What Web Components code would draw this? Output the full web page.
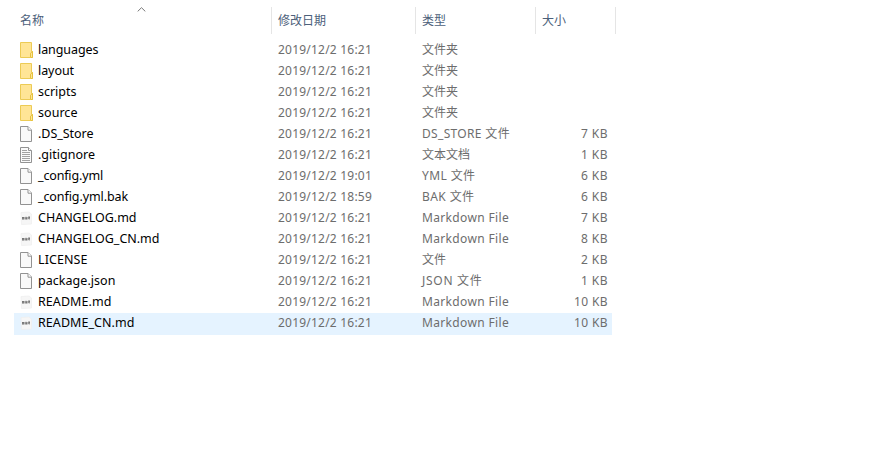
<!DOCTYPE html>
<html lang="zh-CN"><head><meta charset="utf-8"><title>文件列表</title>
<style>html,body{margin:0;background:#fff}body{width:887px;height:449px;overflow:hidden;font-family:"Noto Sans","Noto Sans CJK SC",sans-serif;font-size:12px}</style></head>
<body><file-list></file-list>
<script>
const icons={
folder:'<path d="M.5 .5H11.5V9.5H12.5V15.5H.5Z" fill="#ffe596" stroke="#eccb55"/><path d="M10.5 15V11.2L12.5 9.5V15.5H10.5" fill="#ffe596" stroke="#e6c23f"/>',
file:'<path d="M.5 .5H8L11.5 4V15.5H.5Z" fill="#f9f9f9" stroke="#929292"/><path d="M8 .5V4.2H11.5" fill="#fff" stroke="#929292"/>',
text:'<path d="M.5 .5H8.5L11.5 3.5V15.5H.5Z" fill="#fafafa" stroke="#929292"/><path d="M8.5 .5V3.5H11.5" fill="#fff" stroke="#929292"/><path d="M2 3.5H7M2 5.5H10M2 7.5H10M2 9.5H10M2 11.5H10M2 13.5H10" fill="none" stroke="#a2a2a2"/>',
md:'<path d="M1 2.5L9 2L11.5 4V14L1.5 14.5Z" fill="#f6f6f6" stroke="#eee" stroke-width=".7"/><path d="M2 7H4.5V9.5H2ZM5.2 7H7.5V9.5H5.2ZM8.2 6.5H10V9H8.2Z" fill="#777"/><path d="M3 8.5V10M6 6.5V8M9.2 8V10" stroke="#aaa" stroke-width=".8"/>'};
customElements.define('file-icon',class extends HTMLElement{
connectedCallback(){this.attachShadow({mode:'open'}).innerHTML=`<style>:host{display:block;width:14px;height:16px}svg{display:block}</style><svg width="14" height="16" viewBox="0 0 14 16">${icons[this.getAttribute('kind')]}</svg>`}});
/* Spreads the glyphs so that the label fills its nominal width. */
customElements.define('fit-text',class extends HTMLElement{
connectedCallback(){const w=+this.getAttribute('w');
this.attachShadow({mode:'open'}).innerHTML=`<style>:host{display:inline-block;white-space:pre;line-height:20px}</style><span></span>`;
const s=this.shadowRoot.querySelector('span'),t=this.getAttribute('label');s.textContent=t;
if(w){const n=s.getBoundingClientRect().width,d=(w-n)/t.length;s.style.letterSpacing=d+'px'}}});
customElements.define('column-header',class extends HTMLElement{
connectedCallback(){this.attachShadow({mode:'open'}).innerHTML=`<style>:host{display:grid;grid-template-columns:258px 144px 120px 80px;height:27px;padding:7px 0 6px 14px;color:#4c607a}
div{position:relative;box-sizing:border-box;border-right:1px solid #e5e5e5;padding:4px 0 0 6px}div:first-child{padding-left:3px}svg{position:absolute;left:123px;top:0}</style>
<div><fit-text label="名称" w="24"></fit-text><svg width="9" height="5" viewBox="0 0 9 5"><path d="M.7 4.4L4.5 .7L8.3 4.4" fill="none" stroke="#777"/></svg></div><div><fit-text label="修改日期" w="48"></fit-text></div><div><fit-text label="类型" w="24"></fit-text></div><div><fit-text label="大小" w="24"></fit-text></div>`}});
customElements.define('file-row',class extends HTMLElement{
connectedCallback(){const [k,n,nw,d,t,tw,s]=this.data;
this.attachShadow({mode:'open'}).innerHTML=`<style>:host{display:grid;grid-template-columns:24px 240px 144px 120px 66px;box-sizing:border-box;width:598px;height:22px;margin:0 0 -1px 14px;padding-right:4px;color:#6d6d6d}
:host([selected]){background:#e5f3ff}file-icon{margin:2px 0 0 6px}.name{color:#000;font-size:12.5px}.size{text-align:right}</style>
<file-icon kind="${k}"></file-icon><div class="name"><fit-text label="${n}" w="${nw}"></fit-text></div><div><fit-text label="2019/12/2 ${d}" w="94"></fit-text></div><div><fit-text label="${t}" w="${tw}"></fit-text></div><div class="size">${s?`<fit-text label="${s} KB" w="${s==10?34:27}"></fit-text>`:''}</div>`}});
customElements.define('file-list',class extends HTMLElement{
connectedCallback(){this.attachShadow({mode:'open'}).innerHTML='<style>:host{display:block}</style><column-header></column-header>';
const a='16:21',m='Markdown File',rows=[
['folder','languages',60.5,a,'文件夹',36],['folder','layout',36,a,'文件夹',36],['folder','scripts',38.5,a,'文件夹',36],['folder','source',39.5,a,'文件夹',36],
['file','.DS_Store',55.5,a,'DS_STORE 文件',88,7],['text','.gitignore',57,a,'文本文档',48,1],['file','_config.yml',65,'19:01','YML 文件',53.5,6],['file','_config.yml.bak',90,'18:59','BAK 文件',52.5,6],
['md','CHANGELOG.md',98.5,a,m,87,7],['md','CHANGELOG_CN.md',121.5,a,m,87,8],['file','LICENSE',49.5,a,'文件',24,2],['file','package.json',77.5,a,'JSON 文件',60.5,1],
['md','README.md',73.5,a,m,87,10],['md','README_CN.md',96.5,a,m,87,10]];
rows.forEach((r,i)=>{const e=document.createElement('file-row');e.data=r;if(i==13)e.toggleAttribute('selected');this.shadowRoot.append(e)})}});
</script></body></html>
